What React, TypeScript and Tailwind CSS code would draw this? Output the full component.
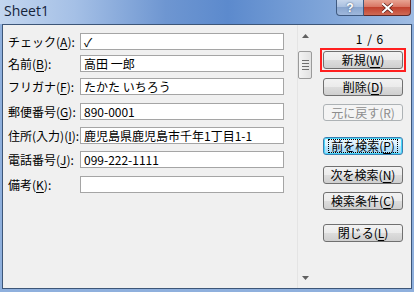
import React from "react";

const jp = "font-['MS_UI_Gothic','Noto_Sans_CJK_JP',sans-serif]";

// one mnemonic-underlined caption: "名前", "B" -> 名前(B)
const Caption = ({ text, hot, tail = "" }: { text: string; hot: string; tail?: string }) => (
  <>
    {text}(<span className="underline underline-offset-2">{hot}</span>){tail}
  </>
);

const fields = [
  { label: "チェック", hot: "A", value: "✓", mt: "mt-0" },
  { label: "名前", hot: "B", value: "高田 一郎", mt: "mt-[5px]" },
  { label: "フリガナ", hot: "F", value: "たかた いちろう", mt: "mt-[6px]" },
  { label: "郵便番号", hot: "G", value: "890-0001", mt: "mt-[8px]" },
  { label: "住所(入力)", hot: "I", value: "鹿児島県鹿児島市千年1丁目1-1", mt: "mt-[7px]" },
  { label: "電話番号", hot: "J", value: "099-222-1111", mt: "mt-[7px]" },
  { label: "備考", hot: "K", value: "", mt: "mt-[8px]" },
];

const WinButton = ({
  children,
  disabled = false,
  focused = false,
}: {
  children: React.ReactNode;
  disabled?: boolean;
  focused?: boolean;
}) => {
  if (disabled) {
    return (
      <div className="h-[17px] w-[80px] rounded-[3px] border border-[#adb2b5] bg-[#f4f4f4] flex items-center justify-center text-[12px] leading-none text-[#8d8d8d]">
        {children}
      </div>
    );
  }
  return (
    <div
      className={`h-[18px] w-[80px] rounded-[3px] border ${
        focused
          ? "border-[#3c7fb1] shadow-[inset_0_0_0_1px_#48d7fb] bg-[linear-gradient(180deg,#eaf6fd_0%,#d9f0fc_50%,#bee6fd_50%,#a7d9f5_100%)]"
          : "border-[#707070] bg-[linear-gradient(180deg,#f2f2f2_0%,#ebebeb_50%,#dddddd_50%,#cfcfcf_100%)]"
      } flex items-center justify-center text-[12px] leading-none text-black`}
    >
      <div
        className={`flex h-[12px] items-center justify-center px-[2px] ${
          focused ? "outline outline-1 outline-dotted outline-black" : ""
        }`}
      >
        {children}
      </div>
    </div>
  );
};

const Scrollbar = () => (
  <div className="w-[15px] self-stretch flex flex-col items-center bg-[#f0f0f0] border-l border-[#e4e4e4]">
    <div className="h-[17px] w-full flex items-center justify-center pt-[4px]">
      <svg width="7" height="4" viewBox="0 0 7 4">
        <path d="M0 4 L3.5 0 L7 4 Z" fill="#606060" />
      </svg>
    </div>
    <div className="mt-[9px] h-[28px] w-[14px] rounded-[2px] border border-[#9a9a9a] bg-[linear-gradient(90deg,#f3f3f3,#e2e2e2)] flex flex-col items-center justify-center gap-[2px]">
      <div className="h-px w-[7px] bg-[#6f6f6f]" />
      <div className="h-px w-[7px] bg-[#6f6f6f]" />
      <div className="h-px w-[7px] bg-[#6f6f6f]" />
      <div className="h-px w-[7px] bg-[#6f6f6f]" />
    </div>
    <div className="flex-1" />
    <div className="h-[17px] w-full flex items-center justify-center pb-[4px]">
      <svg width="7" height="4" viewBox="0 0 7 4">
        <path d="M0 0 L3.5 4 L7 0 Z" fill="#606060" />
      </svg>
    </div>
  </div>
);

const App = () => {
  return (
    <div className="w-[414px] h-[292px] overflow-hidden bg-[#8fb0dd] flex flex-col">
      {/* Title bar */}
      <div className="h-[24px] flex items-start justify-between bg-[linear-gradient(90deg,#c3d6ef_0%,#a5c0e6_18%,#6e96d1_40%,#5c8acd_55%,#7aa1d7_75%,#9fbce3_100%)]">
        <div className="pl-[4px] pt-[3px] text-[14px] leading-[16px] text-[#14233a] font-['Open_Sans','Noto_Sans',sans-serif]">
          Sheet1
        </div>
        <div className="flex mr-[3px]">
          <div className="h-[16px] w-[28px] rounded-bl-[4px] border border-t-0 border-[#3f5a80] bg-[linear-gradient(180deg,#c6d6ec_0%,#a7bedf_50%,#8aa6cf_50%,#9fb8dc_100%)] flex items-center justify-center text-[12px] font-bold leading-none text-white font-['Liberation_Sans',sans-serif] [text-shadow:0_0_2px_#34496b]">
            ?
          </div>
          <div className="h-[16px] w-[47px] rounded-br-[4px] border border-t-0 border-l-0 border-[#5e2a2a] bg-[linear-gradient(180deg,#e8a493_0%,#d7715f_50%,#c2422f_50%,#cf6a55_100%)] flex items-center justify-center">
            <svg width="11" height="10" viewBox="0 0 11 10">
              <path d="M1 1 L10 9 M10 1 L1 9" stroke="#5a1e16" strokeWidth="3.4" strokeLinecap="square" />
              <path d="M1 1 L10 9 M10 1 L1 9" stroke="#ffffff" strokeWidth="2" strokeLinecap="square" />
            </svg>
          </div>
        </div>
      </div>

      {/* Client */}
      <div className="flex-1 flex mx-[2px] mb-[3px] border border-[#3d5678] bg-[#f0f0f0]">
        {/* Fields */}
        <div className={`flex flex-col pl-[5px] pt-[8px] ${jp} text-[12px] text-black`}>
          {fields.map((f) => (
            <div key={f.hot} className={`flex items-center ${f.mt}`}>
              <div className="w-[72px] whitespace-nowrap leading-none">
                <Caption text={f.label} hot={f.hot} tail=":" />
              </div>
              <div className="h-[17px] w-[204px] border border-[#a5a5a5] bg-white flex items-center pl-[3px] leading-none whitespace-nowrap">
                {f.value}
              </div>
            </div>
          ))}
        </div>

        <div className="w-[13px]" />
        <Scrollbar />

        {/* Buttons */}
        <div className={`flex flex-col items-center pl-[8px] pt-[7px] ${jp} text-[12px]`}>
          <div className="h-[14px] w-[84px] pl-[14px] text-center leading-[14px] tracking-[1px] text-black whitespace-pre">
            1 / 6
          </div>
          <div className="mt-[2px] border-2 border-[#ff1f1f] p-[1px]">
            <WinButton>
              <Caption text="新規" hot="W" />
            </WinButton>
          </div>
          <div className="mt-[6px]">
            <WinButton>
              <Caption text="削除" hot="D" />
            </WinButton>
          </div>
          <div className="mt-[8px]">
            <WinButton disabled>元に戻す(R)</WinButton>
          </div>
          <div className="mt-[16px]">
            <WinButton focused>
              <Caption text="前を検索" hot="P" />
            </WinButton>
          </div>
          <div className="mt-[11px]">
            <WinButton>
              <Caption text="次を検索" hot="N" />
            </WinButton>
          </div>
          <div className="mt-[8px]">
            <WinButton>
              <Caption text="検索条件" hot="C" />
            </WinButton>
          </div>
          <div className="mt-[14px]">
            <WinButton>
              <Caption text="閉じる" hot="L" />
            </WinButton>
          </div>
        </div>
      </div>
    </div>
  );
};

export default App;
